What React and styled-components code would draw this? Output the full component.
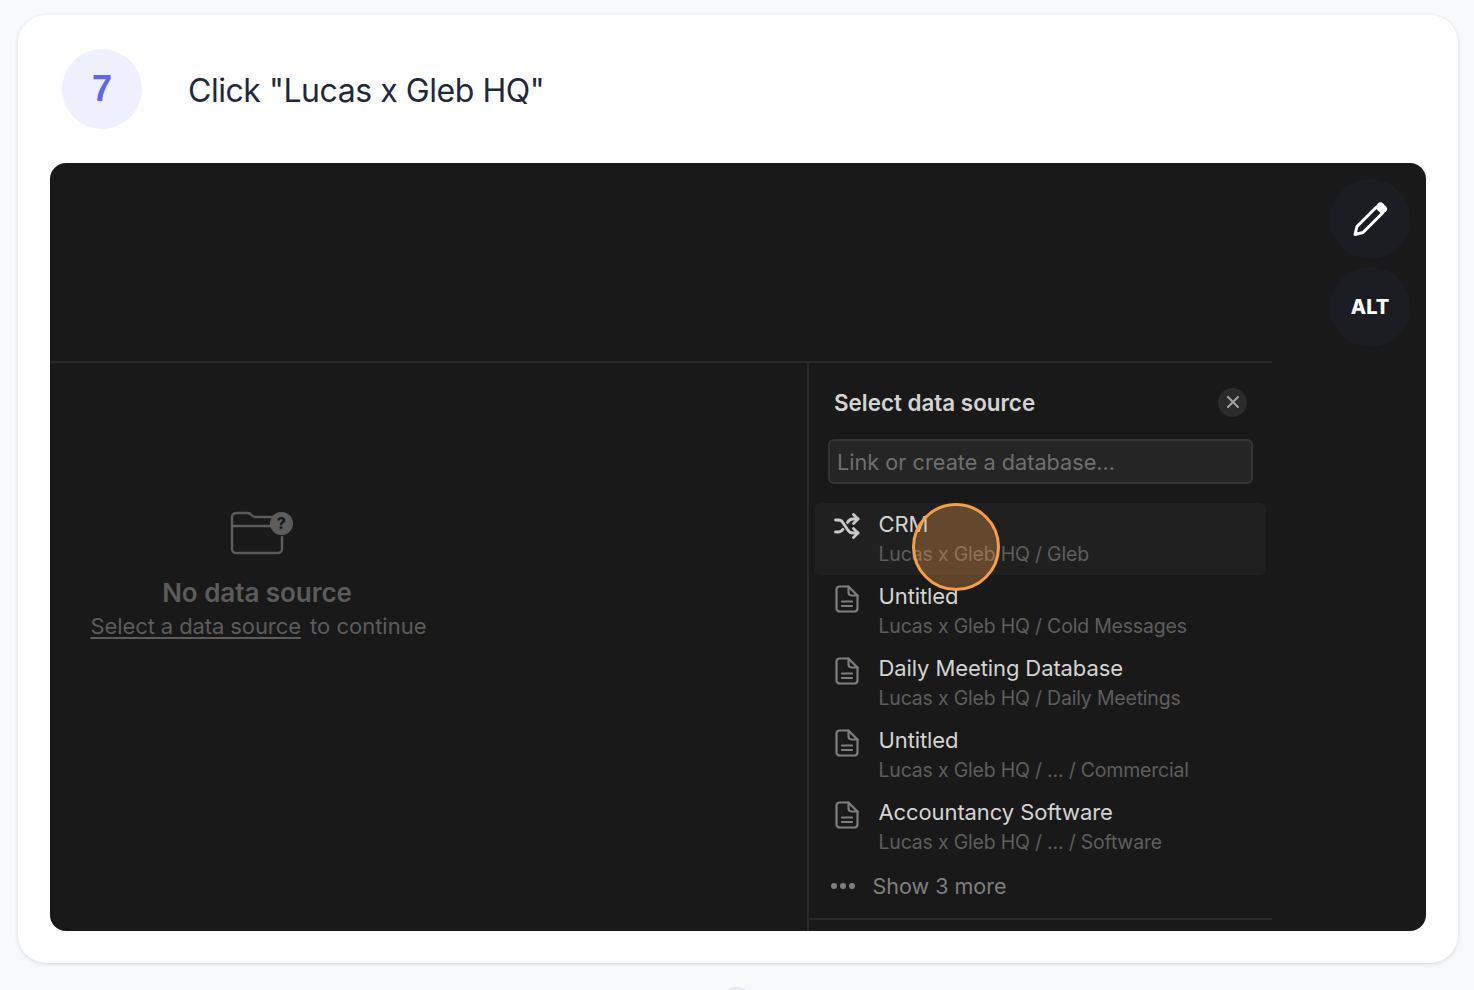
import React from "react";
import styled, { createGlobalStyle } from "styled-components";

const sources = [
  { name: "CRM", path: "Lucas x Gleb HQ / Gleb", kind: "shuffle", active: true },
  { name: "Untitled", path: "Lucas x Gleb HQ / Cold Messages" },
  { name: "Daily Meeting Database", path: "Lucas x Gleb HQ / Daily Meetings" },
  { name: "Untitled", path: "Lucas x Gleb HQ / ... / Commercial" },
  { name: "Accountancy Software", path: "Lucas x Gleb HQ / ... / Software" },
];

const PageIcon = () => (
  <svg width="24" height="28" viewBox="0 0 24 28" fill="none" stroke="#7f7f7f" strokeWidth="2.2" strokeLinejoin="round" strokeLinecap="round">
    <path d="M4.5 1.5H13.5L22.5 10.5V23.5A3 3 0 0 1 19.5 26.5H4.5A3 3 0 0 1 1.5 23.5V4.5A3 3 0 0 1 4.5 1.5Z" />
    <path d="M13.5 1.5V7.5A3 3 0 0 0 16.5 10.5H22.5" />
    <path d="M7 16.5H17M7 21H17" />
  </svg>
);

const ShuffleIcon = () => (
  <svg width="26" height="26" viewBox="0 0 26 26" fill="none" stroke="#c9c9c9" strokeWidth="2.8" strokeLinejoin="round" strokeLinecap="round">
    <path d="M1.5 7H4.5C6.5 7 7.8 8 9 9.7L13.5 16.5C14.7 18.6 16.5 20 19 20H24" />
    <path d="M1.5 19H4.5C6.5 19 7.8 18 9 16.3M13.5 9.5C14.7 7.4 16.5 6 19 6H24" />
    <path d="M19.5 1.5L24 6L19.5 10.5M19.5 15.5L24 20L19.5 24.5" />
  </svg>
);

const FolderIcon = () => (
  <svg width="64" height="46" viewBox="0 0 64 46" fill="none">
    <path d="M46 6H25C22 6 21 2 18 2H6A4 4 0 0 0 2 6V38A4 4 0 0 0 6 42H48A4 4 0 0 0 52 38V26M2 15H44" stroke="#5c5c5c" strokeWidth="2.4" strokeLinecap="round" strokeLinejoin="round" />
    <circle cx="51.5" cy="12.5" r="11.5" fill="#5c5c5c" />
    <text x="51.5" y="18" textAnchor="middle" fontFamily="Inter, sans-serif" fontWeight="800" fontSize="16" fill="#191919">?</text>
  </svg>
);

const PencilIcon = () => (
  <svg width="36" height="36" viewBox="0 0 36 36" fill="none">
    <path d="M3 33.5L5 25.5L24.5 6L30.5 12L11 31.5Z" stroke="#fff" strokeWidth="3" strokeLinejoin="round" />
    <path d="M28.5 5.5L31 8" stroke="#fff" strokeWidth="8" strokeLinecap="round" />
    <path d="M2.5 34L3.6 29.5L6.8 32.8Z" fill="#fff" stroke="#fff" strokeWidth="1" strokeLinejoin="round" />
  </svg>
);

const App = () => {
  return (
    <>
      <GlobalStyle />
      <Card>
        <Header>
          <StepBadge>7</StepBadge>
          <Title>Click "Lucas x Gleb HQ"</Title>
        </Header>
        <Shot>
          <ShotInner>
            <TopBlank />
            <Body>
              <EmptyState>
                <FolderWrap>
                  <FolderIcon />
                </FolderWrap>
                <EmptyTitle>No data source</EmptyTitle>
                <EmptyText>
                  <EmptyLink>Select a data source</EmptyLink> to continue
                </EmptyText>
              </EmptyState>
              <Panel>
                <PanelContent>
                  <PanelHeader>
                    <PanelTitle>Select data source</PanelTitle>
                    <CloseButton>
                      <svg width="14" height="14" viewBox="0 0 14 14" stroke="#a3a3a3" strokeWidth="2" strokeLinecap="round">
                        <path d="M2 2L12 12M12 2L2 12" />
                      </svg>
                    </CloseButton>
                  </PanelHeader>
                  <SearchBox>Link or create a database...</SearchBox>
                  <List>
                    {sources.map((s, i) => (
                      <Row key={i} $active={s.active}>
                        <RowIcon>{s.kind === "shuffle" ? <ShuffleIcon /> : <PageIcon />}</RowIcon>
                        <div>
                          <RowName>{s.name}</RowName>
                          <RowPath>{s.path}</RowPath>
                        </div>
                      </Row>
                    ))}
                  </List>
                  <ShowMore>
                    <Dots>
                      <i />
                      <i />
                      <i />
                    </Dots>
                    Show 3 more
                  </ShowMore>
                </PanelContent>
              </Panel>
            </Body>
          </ShotInner>
          <ClickMarker />
          <FloatingButtons>
            <RoundButton>
              <PencilIcon />
            </RoundButton>
            <RoundButton>ALT</RoundButton>
          </FloatingButtons>
        </Shot>
      </Card>
      <NextStep />
    </>
  );
};

const GlobalStyle = createGlobalStyle`
  html, body {
    margin: 0;
    height: 990px;
    overflow: hidden;
    background: #f8f9fb;
  }
`;

const Card = styled.div`
  box-sizing: border-box;
  width: 1440px;
  height: 948px;
  margin: 15px 0 0 18px;
  padding: 34px 32px 32px;
  background: #fff;
  border-radius: 28px;
  box-shadow: 0 1px 4px rgba(15, 23, 42, 0.14);
`;

const Header = styled.div`
  display: flex;
  align-items: center;
  height: 80px;
  margin: 0 0 34px 12px;
`;

const StepBadge = styled.div`
  width: 80px;
  height: 80px;
  display: flex;
  align-items: center;
  justify-content: center;
  box-sizing: border-box;
  border-radius: 50%;
  background: #eef0fe;
  color: #6366e8;
  font: 700 36px "Liberation Sans", sans-serif;
`;

const Title = styled.div`
  margin-left: 46px;
  padding-top: 3px;
  color: #1e293b;
  font: 400 32px "Inter", "Noto Sans", sans-serif;
  letter-spacing: -0.45px;
`;

const Shot = styled.div`
  position: relative;
  height: 768px;
  border-radius: 16px;
  overflow: hidden;
  background: #191919;
`;

const ShotInner = styled.div`
  width: 1222px;
  height: 100%;
  display: flex;
  flex-direction: column;
  font-family: "Inter", sans-serif;
`;

const TopBlank = styled.div`
  flex: none;
  height: 198px;
  border-bottom: 2px solid #2a2a2a;
`;

const Body = styled.div`
  flex: 1;
  display: flex;
  min-height: 0;
`;

const EmptyState = styled.div`
  width: 757px;
  flex: none;
  box-sizing: border-box;
  padding: 148px 340px 0 0;
  display: flex;
  flex-direction: column;
  align-items: center;
  color: #5c5c5c;
`;

const FolderWrap = styled.div`
  height: 46px;
  margin-left: 7px;
`;

const EmptyTitle = styled.div`
  margin-top: 20px;
  margin-right: 3px;
  font-size: 26px;
  line-height: 32px;
  font-weight: 600;
  letter-spacing: -0.05px;
  white-space: nowrap;
`;

const EmptyText = styled.div`
  margin-top: 1px;
  font-size: 22px;
  line-height: 32px;
  white-space: nowrap;
`;

const EmptyLink = styled.span`
  text-decoration: underline;
  text-underline-offset: 3px;
  letter-spacing: -0.1px;
  margin-right: 3px;
`;

const Panel = styled.div`
  flex: 1;
  display: flex;
  flex-direction: column;
  border-left: 2px solid #2a2a2a;
`;

const PanelContent = styled.div`
  height: 557px;
  box-sizing: border-box;
  padding: 24px 6px 0 6px;
  border-bottom: 2px solid #2a2a2a;
`;

const PanelHeader = styled.div`
  display: flex;
  align-items: center;
  justify-content: space-between;
  height: 30px;
  padding: 0 19px;
`;

const PanelTitle = styled.div`
  color: #d4d4d4;
  font-size: 22.4px;
  font-weight: 600;
`;

const CloseButton = styled.div`
  width: 29px;
  height: 29px;
  border-radius: 50%;
  background: #2b2b2b;
  display: flex;
  align-items: center;
  justify-content: center;
`;

const SearchBox = styled.div`
  box-sizing: border-box;
  height: 45px;
  width: 425px;
  margin: 22px 0 0 13px;
  padding: 0 7px;
  display: flex;
  align-items: center;
  border: 2px solid #363636;
  border-radius: 6px;
  background: #252525;
  color: #6f6f6f;
  font-size: 21.7px;
`;

const List = styled.div`
  margin-top: 19px;
`;

const Row = styled.div`
  display: flex;
  height: 72px;
  box-sizing: border-box;
  padding-left: 19px;
  border-radius: 6px;
  background: ${(p) => (p.$active ? "#202020" : "transparent")};
`;

const RowIcon = styled.div`
  flex: none;
  width: 26px;
  height: 28px;
  margin-top: 10px;
  margin-right: 18.5px;
  display: flex;
  justify-content: center;
`;

const RowName = styled.div`
  margin-top: 6px;
  color: #d4d4d4;
  font-size: 22px;
  line-height: 30px;
  letter-spacing: -0.1px;
`;

const RowPath = styled.div`
  color: #5e5e5e;
  font-size: 19.5px;
  line-height: 30px;
  letter-spacing: -0.2px;
`;

const ShowMore = styled.div`
  display: flex;
  align-items: center;
  height: 30px;
  margin: 8px 0 0 16px;
  color: #7f7f7f;
  font-size: 21.5px;
`;

const Dots = styled.div`
  display: flex;
  gap: 3px;
  margin-right: 17.5px;
  i {
    width: 6px;
    height: 6px;
    border-radius: 50%;
    background: #7f7f7f;
  }
`;

const ClickMarker = styled.div`
  position: absolute;
  left: 862px;
  top: 340px;
  width: 88px;
  height: 88px;
  box-sizing: border-box;
  border-radius: 50%;
  border: 3.5px solid #f59e4c;
  background: rgba(245, 158, 76, 0.32);
`;

const FloatingButtons = styled.div`
  position: absolute;
  top: 16px;
  right: 16px;
  display: flex;
  flex-direction: column;
  gap: 8px;
`;

const RoundButton = styled.div`
  width: 80px;
  height: 80px;
  border-radius: 50%;
  background: #1c1d22;
  display: flex;
  align-items: center;
  justify-content: center;
  color: #fff;
  font: 800 20px "Inter", sans-serif;
`;

const NextStep = styled.div`
  position: absolute;
  left: 720px;
  top: 987px;
  width: 30px;
  height: 30px;
  border: 2px solid #e2e8f0;
  border-radius: 50%;
  background: #f8f9fb;
`;

export default App;
